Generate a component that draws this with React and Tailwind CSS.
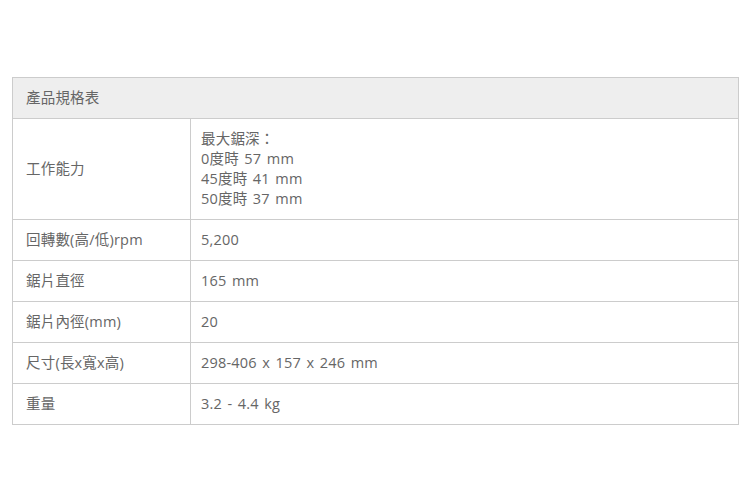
import React from "react";

const rows = [
  { label: "工作能力", value: ["最大鋸深：", "0度時 57 mm", "45度時 41 mm", "50度時 37 mm"] },
  { label: "回轉數(高/低)rpm", value: ["5,200"] },
  { label: "鋸片直徑", value: ["165 mm"] },
  { label: "鋸片內徑(mm)", value: ["20"] },
  { label: "尺寸(長x寬x高)", value: ["298-406 x 157 x 246 mm"] },
  { label: "重量", value: ["3.2 - 4.4 kg"] },
];

const App = () => {
  return (
    <div
      className="w-[750px] h-[500px] bg-white pt-[77px] pl-[12px]"
      style={{ fontFamily: '"Open Sans", "Noto Sans CJK TC", sans-serif' }}
    >
      <table className="w-[727px] border-collapse border border-[#cccccc] text-[14.5px] leading-[20px] tracking-[0.2px] [word-spacing:1.5px] text-[#666666]">
        <thead>
          <tr className="bg-[#eeeeee]">
            <th
              colSpan={2}
              className="border border-[#cccccc] text-left font-normal pl-[13px] py-[10px] h-[41px]"
            >
              產品規格表
            </th>
          </tr>
        </thead>
        <tbody>
          {rows.map((row, i) => (
            <tr key={i}>
              <td className="w-[178px] border border-[#cccccc] pl-[13px] py-[10px] align-middle">
                {row.label}
              </td>
              <td className="border border-[#cccccc] pl-[10px] py-[10px] align-middle">
                {row.value.map((line, j) => (
                  <div key={j}>{line}</div>
                ))}
              </td>
            </tr>
          ))}
        </tbody>
      </table>
    </div>
  );
};

export default App;
